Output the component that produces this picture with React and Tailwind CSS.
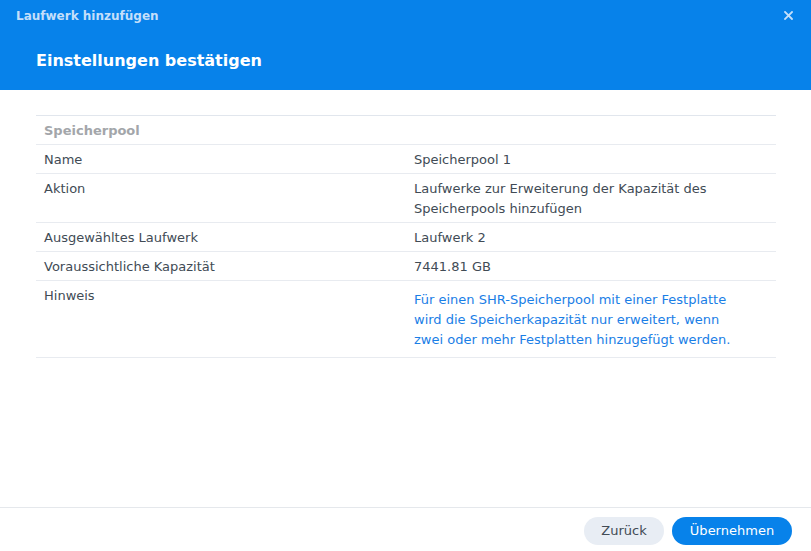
import React from "react";

const rows = [
  { label: "Name", value: "Speicherpool 1" },
  { label: "Aktion", value: "Laufwerke zur Erweiterung der Kapazität des Speicherpools hinzufügen" },
  { label: "Ausgewähltes Laufwerk", value: "Laufwerk 2" },
  { label: "Voraussichtliche Kapazität", value: "7441.81 GB" },
];

export default function App() {
  return (
    <div
      className="w-[811px] h-[551px] bg-white flex flex-col overflow-hidden"
      style={{ fontFamily: '"DejaVu Sans", Verdana, sans-serif' }}
    >
      <div className="bg-[#0782ea] h-[90px] flex flex-col shrink-0">
        <div className="h-[31px] flex items-center justify-between pl-[16px] pr-[18px]">
          <span className="text-[12px] font-bold text-[#c4dffa] leading-none">Laufwerk hinzufügen</span>
          <svg width="9" height="9" viewBox="0 0 9 9" className="text-[#c4dffa]">
            <path d="M1 1 L8 8 M8 1 L1 8" stroke="currentColor" strokeWidth="1.8" strokeLinecap="square" />
          </svg>
        </div>
        <div className="pl-[36px] pt-[22px] text-[16px] font-bold text-white leading-none">
          Einstellungen bestätigen
        </div>
      </div>

      <div className="flex-1 pt-[25px] px-[35px] pl-[36px]">
        <div className="border-t border-[#e1e6ed] text-[13px] leading-[20px] text-[#414b55]">
          <div className="border-b border-[#e8ebf0] pt-[5px] pb-[3px] px-[8px] font-bold text-[#a3a6aa]">
            Speicherpool
          </div>
          {rows.map((r) => (
            <div key={r.label} className="grid grid-cols-2 border-b border-[#e8ebf0] pt-[5px] pb-[3px]">
              <div className="px-[8px]">{r.label}</div>
              <div className="px-[8px] pr-[20px]">{r.value}</div>
            </div>
          ))}
          <div className="grid grid-cols-2 border-b border-[#e8ebf0] pt-[5px] pb-[5px]">
            <div className="px-[8px]">Hinweis</div>
            <div className="px-[8px] pt-[4px] pb-[2px] pr-[30px] text-[#1a7ee6]">
              Für einen SHR-Speicherpool mit einer Festplatte wird die Speicherkapazität nur erweitert, wenn zwei oder mehr Festplatten hinzugefügt werden.
            </div>
          </div>
        </div>
      </div>

      <div className="h-[44px] shrink-0 border-t border-[#e5e8ec] flex justify-end items-start pt-[9px] pr-[19px] gap-[8px]">
        <button className="w-[80px] h-[28px] rounded-full bg-[#e8edf4] text-[13px] text-[#414b55]">
          Zurück
        </button>
        <button className="w-[120px] h-[28px] rounded-full bg-[#0782ea] text-[13px] text-white">
          Übernehmen
        </button>
      </div>
    </div>
  );
}
